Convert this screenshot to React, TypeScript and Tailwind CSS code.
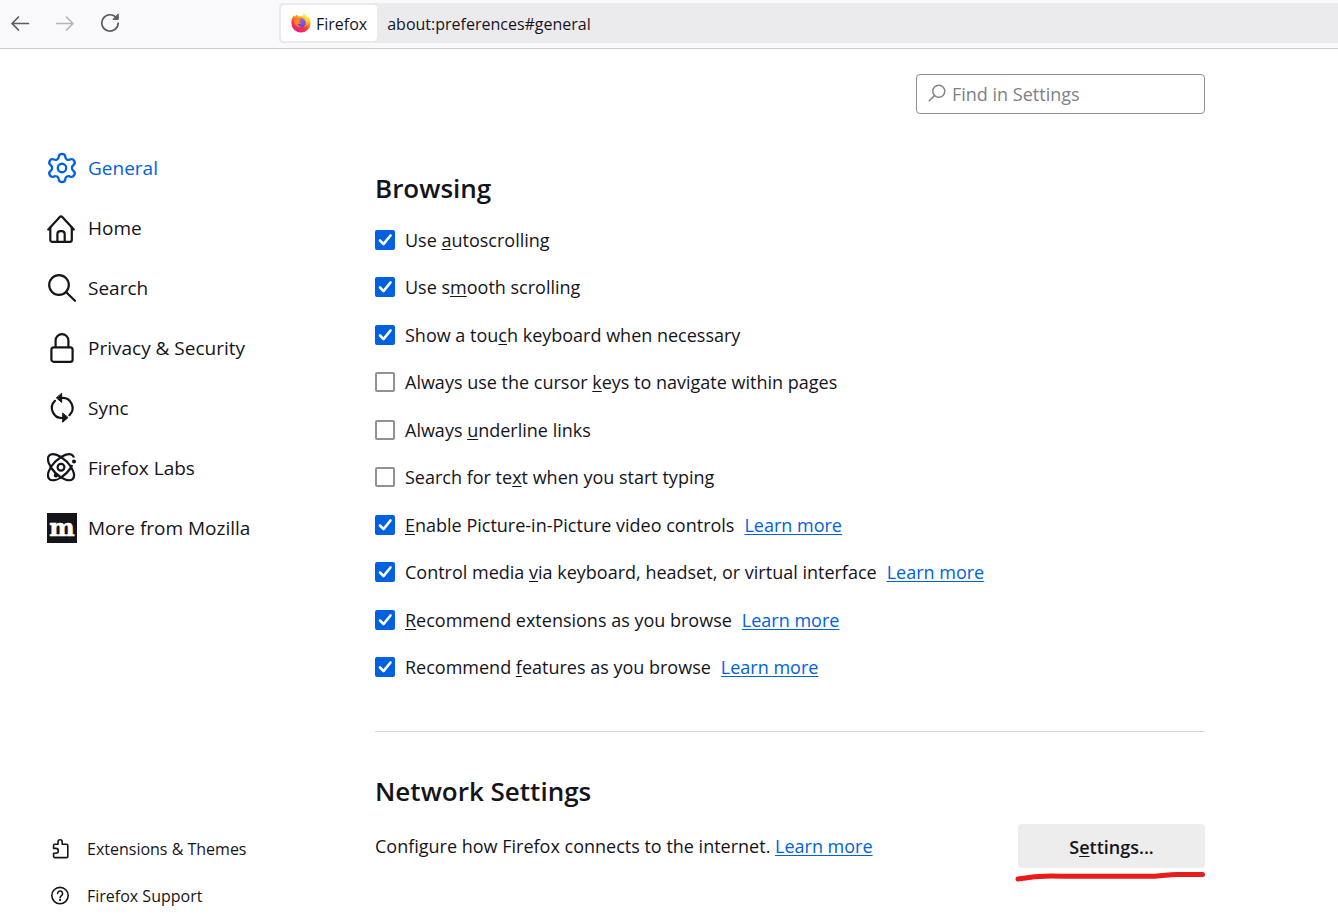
import { ReactNode } from 'react';
import { Settings } from 'lucide-react';

const line = {
  fill: 'none',
  stroke: 'currentColor',
  strokeWidth: 2.2,
  strokeLinecap: 'round' as const,
  strokeLinejoin: 'round' as const,
};

function HomeIcon() {
  return (
    <svg width="30" height="30" viewBox="0 0 30 30" {...line}>
      <path d="M1.3 16.5 12.8 4a1.7 1.7 0 0 1 2.5 0l11.5 12.5" />
      <path d="M3.3 14.5V27a1.9 1.9 0 0 0 1.9 1.9h17.7a1.9 1.9 0 0 0 1.9-1.9V14.5" />
      <path d="M10.4 28.5v-7.4a3 3 0 0 1 3-3h1.3a3 3 0 0 1 3 3v7.4" />
    </svg>
  );
}

function SearchIcon() {
  return (
    <svg width="30" height="30" viewBox="0 0 30 30" {...line}>
      <circle cx="12" cy="12" r="9.8" />
      <path d="m19.2 19.2 8.8 8.6" />
    </svg>
  );
}

function LockIcon() {
  return (
    <svg width="30" height="30" viewBox="0 0 30 30" {...line}>
      <rect x="4.4" y="14.4" width="21.2" height="14.4" rx="2.4" />
      <path d="M8.6 14V7.6a6.4 6.4 0 0 1 12.8 0V14" />
    </svg>
  );
}

function SyncIcon() {
  return (
    <svg width="30" height="30" viewBox="0 0 30 30" {...line}>
      <path d="M14.5 5A10 10 0 0 1 22.4 22.2" />
      <path d="M15.5 25A10 10 0 0 1 8 7.8" />
      <path d="M14.7.6v8.8L9.6 5zM15.7 20.4v8.8l5.1-4.4z" fill="currentColor" strokeWidth="1" />
    </svg>
  );
}

function LabsIcon() {
  return (
    <svg width="30" height="30" viewBox="0 0 30 30" {...line}>
      <ellipse cx="14" cy="14.2" rx="16.6" ry="8" transform="rotate(-45 14 14.2)" />
      <circle cx="27" cy="8.4" r="4" fill="#fff" stroke="none" />
      <circle cx="9" cy="22.3" r="3.4" fill="#fff" stroke="none" />
      <ellipse cx="14" cy="14.2" rx="16.6" ry="8" transform="rotate(45 14 14.2)" />
      <circle cx="14" cy="14.2" r="3.4" />
      <circle cx="27" cy="8.6" r="2" fill="currentColor" stroke="none" />
      <circle cx="9" cy="22.3" r="2.2" fill="currentColor" stroke="none" />
    </svg>
  );
}

function MozillaIcon() {
  return (
    <svg width="30" height="30" viewBox="0 0 30 30">
      <rect width="30" height="30" fill="#15141a" />
      <text x="15" y="23" textAnchor="middle" fontSize="24" fontWeight="700" fill="#fff" stroke="#fff" strokeWidth="0.6" fontFamily='"DejaVu Serif", serif'>m</text>
    </svg>
  );
}

function ExtensionIcon() {
  return (
    <svg width="20" height="20" viewBox="0 0 20 20" {...line} strokeWidth="1.6">
      <path d="M2.6 9V6.4a1.2 1.2 0 0 1 1.2-1.2H7V2.900a2.100 2.100 0 0 1 4.200 0v2.300h4.400a1.200 1.200 0 0 1 1.200 1.200v11a1.200 1.200 0 0 1-1.200 1.200H3.800a1.200 1.200 0 0 1-1.200-1.200v-3.200h2.300a2.300 2.300 0 0 0 0-4.800H2.600z" />
    </svg>
  );
}

function HelpIcon() {
  return (
    <svg width="20" height="20" viewBox="0 0 20 20" {...line} strokeWidth="1.6">
      <circle cx="9" cy="9.600" r="8.200" />
      <path d="M6.600 7.500a2.500 2.500 0 1 1 3.900 2.100c-.9.6-1.400 1-1.400 2" />
      <circle cx="9.100" cy="13.900" r="1.100" fill="currentColor" stroke="none" />
    </svg>
  );
}

function FirefoxLogo() {
  return (
    <svg width="20" height="20" viewBox="0 0 20 20">
      <defs>
        <linearGradient id="ff-body" x1="0.8" y1="0.05" x2="0.25" y2="1">
          <stop offset="0.05" stopColor="#fff44f" />
          <stop offset="0.35" stopColor="#ff980e" />
          <stop offset="0.65" stopColor="#ff3647" />
          <stop offset="1" stopColor="#e31587" />
        </linearGradient>
        <linearGradient id="ff-flame" x1="0.5" y1="0" x2="0.5" y2="1">
          <stop offset="0" stopColor="#fff44f" />
          <stop offset="0.6" stopColor="#ffd43a" />
          <stop offset="1" stopColor="#ff8a2a" />
        </linearGradient>
        <radialGradient id="ff-globe" cx="0.6" cy="0.3" r="0.8">
          <stop offset="0" stopColor="#9059ff" />
          <stop offset="1" stopColor="#5b3fc4" />
        </radialGradient>
      </defs>
      <path d="M12.6.2c-.9 1.3-1 2.3-.6 3.4-1-.5-2.6-.5-4-.1C6.800 3.200 6.300 2.300 6.200 1.600 5.300 2 4.600 2.800 4.200 3.700c-.6-.2-1-.8-1.200-1.500C1.300 4 .4 7.300.4 10.200a9.600 9.300 0 0 0 19.200 0c0-2.900-1.200-5.400-2.700-6.700.1.700.2 1.200.1 1.800C15.900 3 13.700 2.300 12.600.2z" fill="url(#ff-body)" />
      <circle cx="10.2" cy="10" r="4.4" fill="url(#ff-globe)" />
      <path d="M3 7.200C4.400 5.600 6.500 5.700 7.600 6.300c1 .2 2 .2 2.700.5 0 .9-1.700 1.100-2 1.700-.1 1 .9 1.600 2 1.500-.8 1.300-2.700 1.200-3.700.6.3 2 2 3.300 4.100 3.100-3.700 1.300-7.400-1.700-7.700-6.500z" fill="#ff8a1e" />
      <path d="M12.600.2c-1.200 2-.2 3.400 1.200 4.900 2 2.200 2.300 5.400.3 8.200 2.700-1 4.600-3.800 4-7.200-.5-1.100-.8-1.600-1.200-2.600 0 .7.1 1.200.1 1.800C15.900 3 13.700 2.300 12.600.2z" fill="url(#ff-flame)" />
    </svg>
  );
}

const categories = [
  { label: 'General', icon: <Settings size={34} strokeWidth={1.6} className="shrink-0" />, active: true },
  { label: 'Home', icon: <HomeIcon /> },
  { label: 'Search', icon: <SearchIcon /> },
  { label: 'Privacy & Security', icon: <LockIcon /> },
  { label: 'Sync', icon: <SyncIcon /> },
  { label: 'Firefox Labs', icon: <LabsIcon /> },
  { label: 'More from Mozilla', icon: <MozillaIcon /> },
];

// parts: text before the access key, the key itself, text after it
const options: { id: string; parts: [string, string, string]; checked: boolean; more?: boolean }[] = [
  { id: 'autoscroll', parts: ['Use ', 'a', 'utoscrolling'], checked: true },
  { id: 'smooth', parts: ['Use s', 'm', 'ooth scrolling'], checked: true },
  { id: 'touch', parts: ['Show a tou', 'c', 'h keyboard when necessary'], checked: true },
  { id: 'cursor', parts: ['Always use the cursor ', 'k', 'eys to navigate within pages'], checked: false },
  { id: 'underline', parts: ['Always ', 'u', 'nderline links'], checked: false },
  { id: 'typing', parts: ['Search for te', 'x', 't when you start typing'], checked: false },
  { id: 'pip', parts: ['', 'E', 'nable Picture-in-Picture video controls'], checked: true, more: true },
  { id: 'media', parts: ['Control media ', 'v', 'ia keyboard, headset, or virtual interface'], checked: true, more: true },
  { id: 'extensions', parts: ['', 'R', 'ecommend extensions as you browse'], checked: true, more: true },
  { id: 'features', parts: ['Recommend ', 'f', 'eatures as you browse'], checked: true, more: true },
];

function AccessKey({ children }: { children: ReactNode }) {
  return <span className="underline decoration-1 underline-offset-2 [text-decoration-skip-ink:none]">{children}</span>;
}

function LearnMore() {
  return (
    <a href="#learn-more" className="text-[#0061e0] underline decoration-1 underline-offset-2">
      Learn more
    </a>
  );
}

function Checkbox({ id, defaultChecked }: { id: string; defaultChecked: boolean }) {
  return (
    <span className="grid shrink-0">
      <input
        id={id}
        type="checkbox"
        defaultChecked={defaultChecked}
        className="peer col-start-1 row-start-1 size-5 appearance-none rounded-xs border-2 border-[#8f8f9d] bg-white checked:border-[#0061e0] checked:bg-[#0061e0]"
      />
      <svg
        viewBox="0 0 20 20"
        className="pointer-events-none invisible col-start-1 row-start-1 size-5 fill-none stroke-white stroke-[2.6] peer-checked:visible"
        strokeLinecap="round"
        strokeLinejoin="round"
      >
        <path d="m5 10.500 3.500 3.600 7-8.600" />
      </svg>
    </span>
  );
}

export default function App() {
  return (
    <div className="flex min-h-screen flex-col bg-white font-['Open_Sans','Noto_Sans',sans-serif] text-lg text-[#15141a]">
      {/* Toolbar */}
      <header className="flex h-[49px] border-b border-[#cccccc] bg-[#f9f9fb] pb-1">
        <div className="flex w-[279px] shrink-0 items-center gap-[25px] pt-0.5 pl-[10px] text-[#5b5b66]">
          <button aria-label="Back">
            <svg width="20" height="20" viewBox="0 0 20 20" {...line} strokeWidth="1.7">
              <path d="M18.400 10.500H2M8.500 4 2 10.500 8.500 17" />
            </svg>
          </button>
          <button aria-label="Forward" className="text-[#b5b5bb]">
            <svg width="20" height="20" viewBox="0 0 20 20" {...line} strokeWidth="1.700">
              <path d="M1.600 10.500H18M11.500 4l6.500 6.500-6.500 6.500" />
            </svg>
          </button>
          <button aria-label="Reload">
            <svg width="20" height="20" viewBox="0 0 20 20" {...line} strokeWidth="1.700">
              <path d="M16.300 4.700A8.200 8.200 0 1 0 18.200 10" />
              <path d="M18.300 1.300v5.100h-5.100z" fill="currentColor" strokeWidth="1" />
            </svg>
          </button>
        </div>
        <div className="mt-[3px] mb-px flex min-w-0 flex-1 items-center gap-[10px] rounded-l bg-[#ebebed] p-0.5 text-base">
          <div className="flex h-9 shrink-0 items-center gap-[5px] rounded bg-white pr-[10px] pl-[10px]">
            <FirefoxLogo />
            <span className="pt-0.5">Firefox</span>
          </div>
          <input
            aria-label="Address"
            defaultValue="about:preferences#general"
            className="min-w-0 flex-1 bg-transparent pt-0.5 outline-none"
          />
        </div>
      </header>

      <div className="flex flex-1">
        {/* Categories */}
        <aside className="flex w-[375px] shrink-0 flex-col pt-[89px] pl-[47px]">
          <nav className="flex flex-col text-[19px]">
            {categories.map(({ label, icon, active }) => (
              <a
                key={label}
                href="#category"
                className={`flex h-15 items-center gap-[11px] ${active ? 'text-[#0061e0]' : ''}`}
              >
                <span className="flex w-[30px] shrink-0 justify-center">{icon}</span>
                <span className="pt-px">{label}</span>
              </a>
            ))}
          </nav>
          <nav className="mt-auto flex flex-col text-base">
            <a href="#extensions" className="flex h-[47px] items-center gap-4 pt-2 pl-1">
              <ExtensionIcon />
              Extensions &amp; Themes
            </a>
            <a href="#support" className="flex h-[47px] items-center gap-4 pt-2 pl-1">
              <HelpIcon />
              Firefox Support
            </a>
          </nav>
        </aside>

        {/* Main pane */}
        <main className="min-w-0 max-w-[830px] flex-1 pt-[25px]">
          <label className="ml-auto flex h-10 w-[289px] items-center gap-[5px] rounded border border-[#8f8f9d] pl-[10px]">
            <svg width="20" height="20" viewBox="0 0 20 20" {...line} strokeWidth="1.500" className="shrink-0 text-[#84848a]">
              <circle cx="11.800" cy="7.200" r="6" />
              <path d="m7.400 11.600-5.200 5.200" />
            </svg>
            <input
              type="search"
              aria-label="Find in Settings"
              placeholder="Find in Settings"
              className="min-w-0 flex-1 bg-transparent outline-none placeholder:text-[#808086]"
            />
          </label>

          <section className="border-b border-[#d7d7db] pb-10">
            <h2 className="mt-14 mb-[10px] text-[26px] leading-9 font-semibold">Browsing</h2>
            <ul className="grid min-h-[475px] auto-rows-fr">
              {options.map(({ id, parts: [before, key, after], checked, more }) => (
                <li key={id} className="flex items-center gap-[10px]">
                  <Checkbox id={id} defaultChecked={checked} />
                  <label htmlFor={id}>
                    {before}
                    <AccessKey>{key}</AccessKey>
                    {after}
                  </label>
                  {more && <LearnMore />}
                </li>
              ))}
            </ul>
          </section>

          <section>
            <h2 className="mt-[41px] text-[26px] leading-9 font-semibold">Network Settings</h2>
            <div className="mt-[15px] flex items-center justify-between">
              <p>
                Configure how Firefox connects to the internet. <LearnMore />
              </p>
              <div className="relative">
                <button className="h-11 w-[187px] rounded bg-[#ededed] pt-px font-semibold">
                  S<AccessKey>e</AccessKey>ttings...
                </button>
                <svg
                  width="192"
                  height="12"
                  viewBox="0 0 192 12"
                  className="absolute top-[47px] -left-[3px]"
                  fill="none"
                  stroke="#e81c1c"
                  strokeWidth="5"
                  strokeLinecap="round"
                  strokeLinejoin="round"
                >
                  <path d="M3 8C14 6 24 5 36 5c36 .500 72 .300 104 .200C150 4.600 154 3.600 162 3.600h25.500" />
                </svg>
              </div>
            </div>
          </section>
        </main>
      </div>
    </div>
  );
}
